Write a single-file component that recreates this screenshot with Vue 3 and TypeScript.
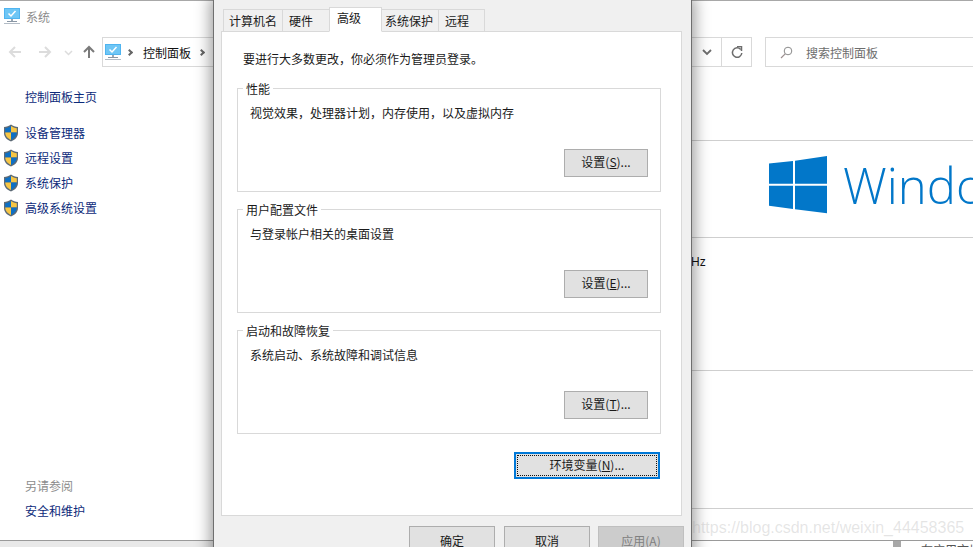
<script setup lang="ts">
const sideLinks = ['设备管理器', '远程设置', '系统保护', '高级系统设置'];
const tabs = [
  { label: '计算机名', width: 60, inset: 5 },
  { label: '硬件', width: 48, inset: 6 },
  { label: '高级', width: 53, inset: 7, active: true },
  { label: '系统保护', width: 58, inset: 3 },
  { label: '远程', width: 47, inset: 6 },
];
const groups = [
  { title: '性能', desc: '视觉效果，处理器计划，内存使用，以及虚拟内存', key: 'S' },
  { title: '用户配置文件', desc: '与登录帐户相关的桌面设置', key: 'E' },
  { title: '启动和故障恢复', desc: '系统启动、系统故障和调试信息', key: 'T' },
];
</script>

<template>
  <div class="desktop">
    <svg width="0" height="0" class="defs">
      <defs>
        <symbol id="pc" viewBox="0 0 16 16">
          <rect x="0" y="0" width="16" height="11" fill="#4fb4f0" />
          <rect x="1" y="1" width="14" height="9" fill="#6ec6f5" />
          <path d="M4.5 5.5 7 8l4.5-5" fill="none" stroke="#fff" stroke-width="1.5" />
          <rect x="7" y="11" width="2" height="2" fill="#9aa7b4" />
          <rect x="3" y="13" width="10" height="1" fill="#8a97a5" />
          <rect x="0" y="15" width="16" height="1" fill="#b3bcc6" />
        </symbol>
        <symbol id="shield" viewBox="0 0 16 18">
          <path d="M8 .5C6 2 3.500 2.800 1 3v6c0 4 3 7 7 8.500 4-1.500 7-4.500 7-8.500V3C12.500 2.800 10 2 8 .5Z" fill="#5d6a76" />
          <path d="M8 2v6.500H2.200V4.200C4.200 4 6.300 3.200 8 2Z" fill="#0d6fc4" />
          <path d="M8 2c1.700 1.200 3.800 2 5.800 2.200v4.300H8Z" fill="#f7c644" />
          <path d="M2.200 8.500H8V16C5 14.800 2.400 12.200 2.200 8.500Z" fill="#f7c644" />
          <path d="M8 8.500h5.800C13.600 12.200 11 14.800 8 16Z" fill="#0d6fc4" />
        </symbol>
      </defs>
    </svg>

    <section class="explorer">
      <header class="title-bar">
        <svg class="pc-icon" width="16" height="16"><use href="#pc" /></svg>
        <span>系统</span>
      </header>

      <nav class="nav-row">
        <svg class="nav-arrows" width="96" height="16" viewBox="0 0 96 16" fill="none">
          <path d="M21 8H10M15 3 10 8l5 5" stroke="#dcdcdc" stroke-width="2" />
          <path d="M39 8h11M45 3l5 5-5 5" stroke="#dcdcdc" stroke-width="2" />
          <path d="m65 7 3.500 3.500L72 7" stroke="#dcdcdc" stroke-width="1.500" />
          <path d="M89 14V3M84 8l5-5 5 5" stroke="#7a7a7a" stroke-width="2" />
        </svg>
        <div class="address">
          <svg class="pc-icon" width="16" height="16"><use href="#pc" /></svg>
          <i class="crumb-sep"></i>
          <span>控制面板</span>
          <i class="crumb-sep"></i>
        </div>
        <div class="address-tools">
          <svg width="10" height="7" viewBox="0 0 10 7" fill="none">
            <path d="m1 1 4 4 4-4" stroke="#6d6d6d" stroke-width="1.800" />
          </svg>
          <span class="tool-divider"></span>
          <svg width="12" height="13" viewBox="0 0 12 13" fill="none">
            <path d="M9.700 3.500A4.700 4.700 0 1 0 10.800 7" stroke="#6d6d6d" stroke-width="1.500" />
            <path d="M6 .5h4.500V5" stroke="#6d6d6d" stroke-width="1.500" />
          </svg>
        </div>
        <div class="search">
          <svg width="13" height="13" viewBox="0 0 13 13" fill="none">
            <circle cx="8" cy="5" r="3.800" stroke="#8a8a8a" />
            <path d="M5.200 7.800 1 12" stroke="#9c8f90" stroke-width="1.200" />
          </svg>
          <span>搜索控制面板</span>
        </div>
      </nav>

      <div class="body">
        <aside class="sidebar">
          <a class="home-link">控制面板主页</a>
          <ul class="side-links">
            <li v-for="link in sideLinks" :key="link">
              <svg width="16" height="18"><use href="#shield" /></svg>
              <a>{{ link }}</a>
            </li>
          </ul>
          <div class="see-also">
            <p>另请参阅</p>
            <a>安全和维护</a>
          </div>
        </aside>

        <main class="content">
          <div class="blank-top"></div>
          <div class="edition">
            <svg class="logo" width="58" height="58" viewBox="0 0 58 58" fill="#0277c9">
              <path d="M0 7.500 24 5v22.700H0ZM26 4.800 58 0v27.700H26ZM0 29.700h24V53L0 49.700ZM26 29.700h32V57.300L26 53.300Z" />
            </svg>
            <span class="wordmark">Windows 10</span>
          </div>
          <div class="specs">Hz</div>
          <div class="computer-name"></div>
          <div class="activation"></div>
        </main>
      </div>
    </section>

    <div class="below">
      <span class="below-scroll"></span>
      <span class="below-text">在应用市场</span>
    </div>

    <section class="dialog">
      <div class="tabs">
        <div
          v-for="tab in tabs"
          :key="tab.label"
          class="tab"
          :class="{ active: tab.active }"
          :style="{ width: tab.width + 'px', paddingLeft: tab.inset + 'px' }"
        >
          {{ tab.label }}
        </div>
      </div>
      <div class="pane">
        <p class="notice">要进行大多数更改，你必须作为管理员登录。</p>
        <div v-for="group in groups" :key="group.key" class="group">
          <span class="legend">{{ group.title }}</span>
          <p class="desc">{{ group.desc }}</p>
          <button class="btn settings"><span class="btn-label">设置(<u>{{ group.key }}</u>)...</span></button>
        </div>
        <div class="env-row">
          <button class="btn env"><span class="focus">环境变量(<u>N</u>)...</span></button>
        </div>
      </div>
      <div class="actions">
        <button class="btn action">确定</button>
        <button class="btn action">取消</button>
        <button class="btn action disabled">应用(<u>A</u>)</button>
      </div>
    </section>

    <span class="watermark">https://blog.csdn.net/weixin_44458365</span>
  </div>
</template>

<style scoped>
.desktop {
  position: relative;
  width: 973px;
  height: 547px;
  overflow: hidden;
  background: #fff;
  font-family: "Noto Sans CJK SC", "Noto Sans", sans-serif;
  font-size: 12px;
  color: #1a1a1a;
}

.defs {
  position: absolute;
}

.explorer {
  display: flex;
  flex-direction: column;
  height: 541px;
  box-sizing: border-box;
  background: #fff;
  border-top: 1px solid #a8a8a8;
  border-bottom: 1px solid #9a9a9a;
  box-shadow: 0 1px 3px rgba(0, 0, 0, 0.3);
}

.title-bar {
  display: flex;
  align-items: center;
  gap: 6px;
  height: 30px;
  padding: 0 0 0 4px;
  box-sizing: border-box;
  color: #8c8c8c;
}

.nav-row {
  display: flex;
  align-items: center;
  height: 30px;
  margin-top: 6px;
}

.nav-arrows {
  flex: none;
  width: 96px;
  margin-right: 6px;
}

.address {
  display: flex;
  flex: none;
  align-items: center;
  width: 590px;
  height: 30px;
  box-sizing: border-box;
  padding-left: 2px;
  border: 1px solid #d9d9d9;
  color: #111;
}

.crumb-sep {
  width: 5px;
  height: 5px;
  margin: 0 11px 0 6px;
  border-top: 2px solid #666;
  border-right: 2px solid #666;
  box-sizing: border-box;
  transform: rotate(45deg);
}

.address span + .crumb-sep {
  margin-left: 8px;
}

.address-tools {
  display: flex;
  flex: none;
  align-items: center;
  width: 60px;
  height: 30px;
  box-sizing: border-box;
  padding-left: 10px;
  border: 1px solid #d9d9d9;
  border-left: 0;
}

.tool-divider {
  width: 1px;
  height: 28px;
  margin: 0 9px 0 9px;
  background: #d9d9d9;
}

.search {
  display: flex;
  flex: 1;
  align-items: center;
  gap: 13px;
  height: 30px;
  margin-left: 13px;
  padding-left: 14px;
  box-sizing: border-box;
  border: 1px solid #d9d9d9;
  border-right: 0;
  color: #6d6d6d;
}

.body {
  display: flex;
  flex: 1;
  min-height: 0;
}

.sidebar {
  display: flex;
  flex: none;
  flex-direction: column;
  width: 214px;
  box-sizing: border-box;
  padding-top: 21px;
}

.sidebar a {
  color: #0c2a7a;
}

.home-link {
  height: 18px;
  margin-left: 25px;
  line-height: 18px;
}

.side-links {
  margin: 14px 0 0;
  padding: 0 0 0 3px;
  list-style: none;
}

.side-links li {
  display: flex;
  align-items: center;
  gap: 6px;
  height: 25px;
}

.see-also {
  margin: auto 0 0 25px;
  padding-bottom: 20px;
}

.see-also p {
  margin: 0 0 7px;
  color: #8c8c8c;
  line-height: 18px;
}

.see-also a {
  display: block;
  line-height: 18px;
}

.content {
  flex: 1;
  min-width: 0;
  display: flex;
  flex-direction: column;
  overflow: hidden;
}

.blank-top {
  flex: none;
  height: 73px;
}

.edition {
  display: flex;
  flex: none;
  align-items: center;
  height: 97px;
  box-sizing: border-box;
  padding: 0 0 9px 555px;
  border-top: 1px solid #cfcfcf;
  white-space: nowrap;
}

.logo {
  flex: none;
}

.wordmark {
  flex: none;
  margin-left: 16px;
  font-family: "Open Sans", sans-serif;
  font-size: 49px;
  font-weight: 300;
  line-height: 58px;
  color: #0277c9;
}

.specs {
  flex: none;
  height: 133px;
  box-sizing: border-box;
  padding: 17px 0 0 477px;
  border-top: 1px solid #cfcfcf;
  font-family: "Liberation Sans", sans-serif;
  font-size: 12px;
  color: #111;
}

.computer-name {
  flex: none;
  height: 137px;
  border-top: 1px solid #cfcfcf;
}

.activation {
  flex: 1;
  border-top: 1px solid #cfcfcf;
}

.below {
  display: flex;
  align-items: flex-start;
  height: 6px;
  padding-left: 893px;
  overflow: hidden;
  background: linear-gradient(90deg, #e9e9e9 0 214px, #fff 214px);
  white-space: nowrap;
}

.below-scroll {
  flex: none;
  width: 8px;
  height: 6px;
  background: #a8a8a8;
}

.below-text {
  margin-left: 20px;
  line-height: 18px;
  color: #555;
}

.dialog {
  position: absolute;
  top: 0;
  left: 213px;
  display: flex;
  flex-direction: column;
  width: 479px;
  height: 560px;
  box-sizing: border-box;
  padding: 7px 9px 0 7px;
  background: #f0f0f0;
  border-left: 1px solid #6f6f6f;
  border-right: 1px solid #6f6f6f;
  box-shadow: 0 0 14px 3px rgba(0, 0, 0, 0.38);
}

.tabs {
  display: flex;
  align-items: flex-end;
  height: 25px;
  margin-left: 2px;
  position: relative;
  z-index: 1;
}

.tab {
  display: flex;
  flex: none;
  align-items: center;
  height: 23px;
  box-sizing: border-box;
  margin-right: -1px;
  padding-bottom: 1px;
  background: #f0f0f0;
  border: 1px solid #d9d9d9;
  color: #1a1a1a;
}

.tab.active {
  position: relative;
  height: 25px;
  padding-bottom: 5px;
  background: #fff;
  border-bottom-color: #fff;
}

.pane {
  display: flex;
  flex-direction: column;
  gap: 17px;
  height: 485px;
  box-sizing: border-box;
  margin-top: -1px;
  padding: 0 20px 0 15px;
  background: #fff;
  border: 1px solid #d9d9d9;
}

.notice {
  height: 38px;
  margin: 0 0 -17px;
  padding: 18px 0 0 6px;
  box-sizing: content-box;
  line-height: 18px;
}

.group {
  position: relative;
  display: flex;
  flex: none;
  flex-direction: column;
  height: 104px;
  box-sizing: border-box;
  border: 1px solid #d9d9d9;
}

.legend {
  position: absolute;
  top: -9px;
  left: 5px;
  padding: 0 3px;
  background: #fff;
  line-height: 18px;
}

.desc {
  margin: 15px 0 0 12px;
  line-height: 18px;
}

.btn {
  box-sizing: border-box;
  padding: 0;
  background: #e1e1e1;
  border: 1px solid #adadad;
  border-radius: 0;
  font-family: inherit;
  font-size: 12px;
  color: #1a1a1a;
}

.settings {
  align-self: flex-end;
  width: 84px;
  height: 28px;
  margin: 27px 12px 0 0;
}

.btn-label {
  display: block;
  margin-top: -3px;
}

.env-row {
  display: flex;
  justify-content: flex-end;
  margin: 1px 1px 0 0;
}

.env {
  width: 146px;
  height: 27px;
  padding: 1px;
  border: 2px solid #0078d7;
  font-size: 12px;
}

.focus {
  display: flex;
  align-items: center;
  justify-content: center;
  height: 100%;
  box-sizing: border-box;
  padding-bottom: 2px;
  outline: 1px dotted #111;
  outline-offset: -1px;
}

.actions {
  display: flex;
  justify-content: flex-end;
  gap: 9px;
  margin: 10px -3px 0 0;
  padding-right: 1px;
}

.action {
  width: 86px;
  height: 28px;
}

.action.disabled {
  margin-left: -1px;
  background: #cccccc;
  border-color: #bfbfbf;
  color: #808080;
}

.watermark {
  position: absolute;
  left: 692px;
  top: 518px;
  font-family: "Liberation Sans", Arial, sans-serif;
  font-size: 16px;
  line-height: 20px;
  color: rgba(150, 150, 150, 0.25);
  white-space: nowrap;
}
</style>

<style>
html,
body {
  margin: 0;
  background: #fff;
}
</style>
